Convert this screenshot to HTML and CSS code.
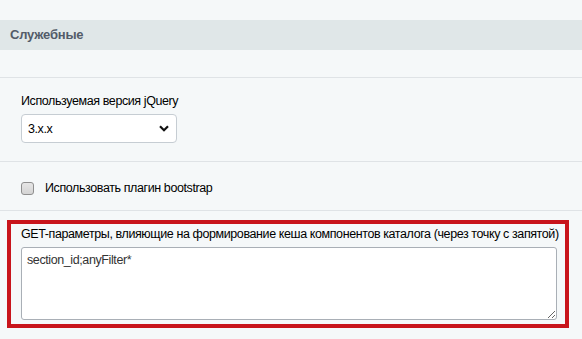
FILE: index.html
```html
<!DOCTYPE html>
<html lang="ru">

<head>
    <meta charset="UTF-8">
    <meta name="viewport" content="width=device-width, initial-scale=1.0">
    <title>Служебные</title>
    <link rel="stylesheet" href="styles.css">
</head>

<body>
    <div class="settings">
        <div class="section-head">Служебные</div>
        <div class="row row-empty"></div>

        <div class="row row-field">
            <label class="field-label" for="jquery">Используемая версия jQuery</label>
            <div class="select-wrap">
                <select id="jquery" class="select">
                    <option>3.x.x</option>
                </select>
                <svg class="select-arrow" width="10" height="7" viewBox="0 0 10 7">
                    <path d="M1 1.2 L5 5.2 L9 1.2" fill="none" stroke="#111" stroke-width="2.2" />
                </svg>
            </div>
        </div>

        <div class="row row-check">
            <label class="check">
                <input type="checkbox" class="check-box">
                <span>Использовать плагин bootstrap</span>
            </label>
        </div>

        <div class="highlight">
            <label class="field-label" for="params">GET-параметры, влияющие на формирование кеша компонентов каталога (через точку с запятой)</label>
            <textarea id="params" class="textarea">section_id;anyFilter*</textarea>
        </div>
    </div>
</body>

</html>
```

FILE: styles.css
```css
* {
    margin: 0;
    padding: 0;
    box-sizing: border-box;
}

body {
    background-color: #f5f8f9;
    font-family: "Liberation Sans", Arial, sans-serif;
    font-size: 12.5px;
    line-height: 15px;
    letter-spacing: -0.4px;
    color: #000;
}

.settings {
    padding-top: 20px;
}

.section-head {
    height: 30px;
    line-height: 30px;
    padding-left: 10px;
    background-color: #e0e7e8;
    color: #535c69;
    font-size: 13px;
    font-weight: bold;
    letter-spacing: -0.2px;
}

.row {
    border-bottom: 1px solid #dfe3e6;
}

.row-empty {
    height: 28px;
}

.row-field {
    padding: 16px 0 18px 21px;
}

.field-label {
    display: block;
}

.select-wrap {
    position: relative;
    width: 156px;
    margin-top: 5px;
}

.select {
    appearance: none;
    width: 100%;
    height: 29px;
    padding: 0 24px 0 6px;
    border: 1px solid #c6cdd3;
    border-radius: 4px;
    background-color: #fff;
    font-family: inherit;
    font-size: 12.5px;
    letter-spacing: -0.4px;
    color: #000;
}

/* стрелка поверх select */
.select-arrow {
    position: absolute;
    right: 8px;
    top: 11px;
    pointer-events: none;
}

.row-check {
    height: 49px;
    padding: 4px 0 0 21px;
    display: flex;
    align-items: center;
}

.check {
    display: flex;
    align-items: center;
    gap: 11px;
}

.check-box {
    appearance: none;
    width: 13px;
    height: 13px;
    border: 1px solid #8f8f8f;
    border-radius: 3px;
    background: linear-gradient(#e6e6e6, #d4d4d4);
}

.highlight {
    width: 562px;
    margin: 9px 0 0 7px;
    padding: 3px 8px 4px 10px;
    border: 4px solid #c8141b;
}

.highlight .field-label {
    white-space: nowrap;
}

.textarea {
    display: block;
    width: 536px;
    height: 73px;
    margin-top: 5px;
    padding: 5px 5px;
    border: 1px solid #a9afb6;
    border-radius: 3px;
    background-color: #fff;
    font-family: inherit;
    font-size: 12.5px;
    line-height: 15px;
    letter-spacing: -0.4px;
    color: #333;
    resize: vertical;
}
```
